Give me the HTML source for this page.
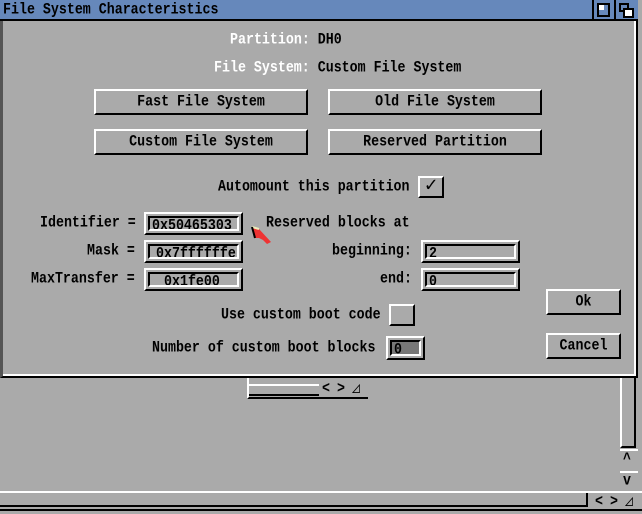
<!DOCTYPE html><html><head><style>
body{margin:0;width:642px;height:514px;background:#aaa;position:relative;overflow:hidden;font-family:"Liberation Mono",monospace;font-size:13.3px;color:#000}
div{position:absolute;box-sizing:border-box}
.t{white-space:nowrap;line-height:16px;transform:scaleY(1.15);font-weight:bold}
span.t{display:inline-block}
.w{color:#fff}
.b{border-top:2px solid #fff;border-left:2px solid #fff;border-right:2px solid #000;border-bottom:2px solid #000;text-align:center;line-height:20px}
.b>span{line-height:22px}
.f{border-top:2px solid #fff;border-left:2px solid #fff;border-right:2px solid #000;border-bottom:2px solid #000}
.f>i{position:absolute;left:2px;top:2px;right:2px;bottom:2px;border-top:2px solid #000;border-left:2px solid #000;border-right:2px solid #fff;border-bottom:2px solid #fff;font-style:normal;padding-left:2px;line-height:15px;white-space:nowrap;font-weight:bold;overflow:hidden}
.f>i>span{display:inline-block;transform:scaleY(1.15)}
</style></head><body>
<div style="left:247px;top:378px;width:121px;height:21px;border-left:2px solid #fff;border-bottom:2px solid #000;background:#aaa"></div>
<div style="left:249px;top:384px;width:70px;height:12px;border-top:2px solid #fff;border-bottom:2px solid #000"></div>
<div class="t" style="left:322px;top:381px">&lt;</div><div class="t" style="left:337px;top:381px">&gt;</div><div class="t" style="left:352px;top:381px">◿</div>
<div style="left:620px;top:378px;width:16px;height:70px;border-left:2px solid #fff;border-right:2px solid #000;border-bottom:2px solid #000"></div>
<div class="t" style="left:623px;top:452px">^</div><div class="t" style="left:623px;top:473px">v</div>
<div style="left:620px;top:449px;width:18px;height:2px;background:#fff"></div>
<div style="left:620px;top:471px;width:18px;height:2px;background:#fff"></div>
<div style="left:0;top:491px;width:642px;height:2px;background:#fff"></div>
<div style="left:0;top:493px;width:588px;height:14px;border-bottom:2px solid #000;border-right:2px solid #000"></div>
<div style="left:0;top:509px;width:642px;height:2px;background:#000"></div>
<div class="t" style="left:595px;top:494px">&lt;</div><div class="t" style="left:610px;top:494px">&gt;</div><div class="t" style="left:625px;top:494px">◿</div>
<div style="left:0;top:0;width:638px;height:378px;background:#aaa;border-left:3px solid #555;border-right:2px solid #000;border-bottom:2px solid #000;box-shadow:inset -2px -2px 0 #fff"></div>
<div style="left:0;top:0;width:638px;height:21px;background:#6688bb;border-bottom:2px solid #000"></div>
<div class="t" style="left:3px;top:2px">File System Characteristics</div>
<div style="left:592px;top:0;width:2px;height:20px;background:#000"></div>
<div style="left:614px;top:0;width:2px;height:20px;background:#000"></div>
<div style="left:597px;top:3px;width:13px;height:14px;border:2px solid #000"></div>
<div style="left:599px;top:5px;width:5px;height:5px;background:#fff"></div>
<div style="left:619px;top:3px;width:10px;height:9px;border:2px solid #000"></div>
<div style="left:623px;top:8px;width:11px;height:10px;border:2px solid #000;background:#fff"></div>
<div class="t w" style="left:230px;top:32px">Partition: <span style="color:#000">DH0</span></div>
<div class="t w" style="left:214px;top:60px">File System: <span style="color:#000">Custom File System</span></div>
<div class="b" style="left:94px;top:89px;width:214px;height:26px"><span class="t">Fast File System</span></div>
<div class="b" style="left:328px;top:89px;width:214px;height:26px"><span class="t">Old File System</span></div>
<div class="b" style="left:94px;top:129px;width:214px;height:26px"><span class="t">Custom File System</span></div>
<div class="b" style="left:328px;top:129px;width:214px;height:26px"><span class="t">Reserved Partition</span></div>
<div class="t" style="left:218px;top:179px">Automount this partition</div>
<div class="b" style="left:418px;top:176px;width:26px;height:22px;font-size:20px;font-weight:bold;line-height:18px">✓</div>
<div class="t" style="left:40px;top:215px">Identifier =</div>
<div class="t" style="left:87px;top:243px">Mask =</div>
<div class="t" style="left:31px;top:271px">MaxTransfer =</div>
<div class="f" style="left:144px;top:212px;width:99px;height:23px"><i><span>0x50465303</span></i></div>
<div class="f" style="left:144px;top:240px;width:99px;height:23px"><i style="padding-left:6px"><span>0x7ffffffe</span></i></div>
<div class="f" style="left:144px;top:268px;width:99px;height:23px"><i style="padding-left:14px"><span>0x1fe00</span></i></div>
<div class="t" style="left:266px;top:215px">Reserved blocks at</div>
<div class="t" style="left:332px;top:243px">beginning:</div>
<div class="t" style="left:380px;top:271px">end:</div>
<div class="f" style="left:421px;top:240px;width:99px;height:23px"><i><span>2</span></i></div>
<div class="f" style="left:421px;top:268px;width:99px;height:23px"><i><span>0</span></i></div>
<div class="b" style="left:546px;top:289px;width:75px;height:26px"><span class="t">Ok</span></div>
<div class="b" style="left:546px;top:333px;width:75px;height:26px"><span class="t">Cancel</span></div>
<div class="t" style="left:221px;top:307px">Use custom boot code</div>
<div class="b" style="left:389px;top:304px;width:26px;height:22px"></div>
<div class="t" style="left:152px;top:340px">Number of custom boot blocks</div>
<div class="f" style="left:386px;top:336px;width:39px;height:24px"><i style="background:#777"><span>0</span></i></div>
<svg style="position:absolute;left:251px;top:226px" width="22" height="24"><polygon points="1,1 8,3 20,16 16,18 12,14 8,12 3,12" fill="#e33"/><polyline points="1,1 8,3" stroke="#eeb" stroke-width="2"/><polyline points="1,1 4,12" stroke="#000" stroke-width="2"/></svg>
</body></html>
